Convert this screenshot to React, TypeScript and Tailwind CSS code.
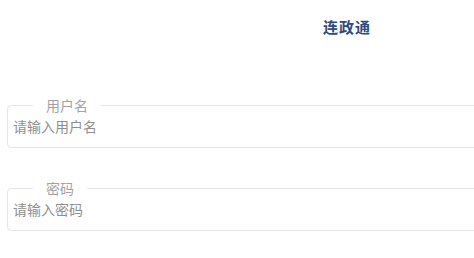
import React from "react"

const cjk = { fontFamily: '"Noto Sans CJK SC", "Noto Sans", sans-serif' }

function Field({ label, placeholder, type = "text" }: { label: string; placeholder: string; type?: string }) {
  return (
    <fieldset className="ml-[7px] h-[50px] rounded-[4px] border border-[#e6e6e6]">
      <legend className="ml-[25px] px-[13px] text-[14px] leading-[14px] text-[#a3a3a3]">{label}</legend>
      <input
        type={type}
        placeholder={placeholder}
        className="block h-[28px] w-full bg-transparent pl-[5px] text-[14px] text-[#333] outline-none placeholder:text-[#8f8f8f]"
        style={cjk}
      />
    </fieldset>
  )
}

export default function App() {
  return (
    <div className="h-[258px] w-[474px] overflow-hidden bg-white" style={cjk}>
      <div className="w-[694px]">
        <h1 className="pt-[17px] text-center text-[15px] font-semibold leading-[20px] tracking-[1px] text-[#2d4b7d]">连政通</h1>
        <div className="mt-[61px] flex flex-col gap-[33px]">
          <Field label="用户名" placeholder="请输入用户名" />
          <Field label="密码" placeholder="请输入密码" type="password" />
        </div>
      </div>
    </div>
  )
}
